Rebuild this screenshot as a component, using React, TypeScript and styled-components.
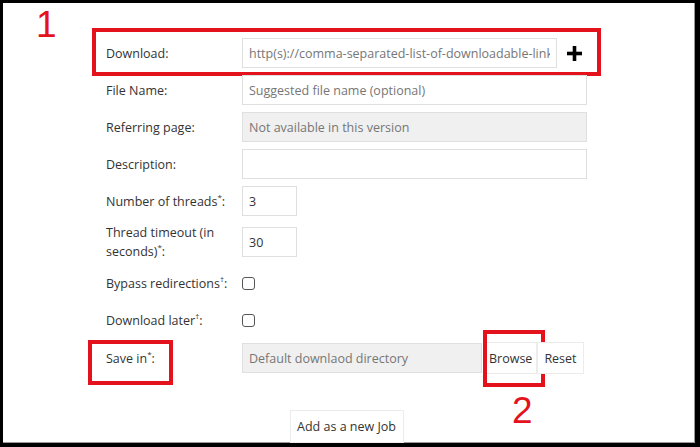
import React from "react";
import styled, { createGlobalStyle, css } from "styled-components";

const GlobalStyle = createGlobalStyle`
  html, body {
    margin: 0;
    padding: 0;
    background: #000;
  }
  body {
    font-family: "Open Sans", "Noto Sans", Arial, sans-serif;
    font-size: 12.5px;
    color: #333;
  }
`;

const Frame = styled.div`
  margin: 3px 5px 4px 3px;
  height: 440px;
  background: #fff;
  box-shadow: inset -1px -1px 0 #9a9a9a;
  overflow: hidden;
`;

const Form = styled.div`
  width: 481px;
  padding: 35px 0 0 103px;
  display: flex;
  flex-direction: column;
  gap: 7px;
`;

const Row = styled.div<{ $marked?: boolean }>`
  position: relative;
  display: grid;
  grid-template-columns: 136px 1fr;
  align-items: center;
  min-height: 30px;

  ${(p) =>
    p.$marked &&
    css`
      &::after {
        content: "";
        position: absolute;
        top: -10px;
        left: -14px;
        right: -14px;
        bottom: -8px;
        border: 4px solid #e3121d;
        pointer-events: none;
      }
    `}
`;

const Label = styled.label<{ $marked?: boolean }>`
  position: relative;
  align-self: stretch;
  display: flex;
  align-items: center;
  line-height: 19px;
  color: #333;

  sup {
    font-size: 8px;
    line-height: 0;
    vertical-align: 6px;
  }

  ${(p) =>
    p.$marked &&
    css`
      &::after {
        content: "";
        position: absolute;
        top: -2px;
        left: -18px;
        width: 85px;
        height: 45px;
        box-sizing: border-box;
        border: 4px solid #e3121d;
        pointer-events: none;
      }
    `}
`;

const Mark = styled.span`
  position: absolute;
  font-family: "Liberation Sans", Arial, sans-serif;
  font-size: 37px;
  line-height: 37px;
  color: #e3121d;
  pointer-events: none;
`;

const Field = styled.div`
  display: flex;
  align-items: center;
`;

const Input = styled.input<{ $width?: number; $disabled?: boolean }>`
  box-sizing: border-box;
  height: 30px;
  width: ${(p) => (p.$width ? `${p.$width}px` : "100%")};
  padding: 0 6px;
  border: 1px solid #dfdfdf;
  border-radius: 0;
  background: ${(p) => (p.$disabled ? "#f0f0f0" : "#fff")};
  font-family: inherit;
  font-size: 12.5px;
  color: #333;
  outline: none;

  &::placeholder {
    color: #767676;
    opacity: 1;
  }
`;

const AddLink = styled.button`
  margin-left: 10px;
  padding: 0;
  border: 0;
  background: none;
  display: flex;
  cursor: pointer;
`;

const Check = styled.input`
  appearance: none;
  box-sizing: border-box;
  margin: 0;
  width: 13px;
  height: 13px;
  border: 1.5px solid #555;
  border-radius: 3px;
  background: #fff;
`;

const Button = styled.button<{ $marked?: boolean; $pad?: number }>`
  position: relative;
  box-sizing: border-box;
  height: 32px;
  padding: 0 ${(p) => p.$pad ?? 6}px;
  border: 1px solid #ececec;
  background: #fff;
  font-family: inherit;
  font-size: 12.5px;
  color: #333;
  white-space: nowrap;
  cursor: pointer;

  ${(p) =>
    p.$marked &&
    css`
      &::after {
        content: "";
        position: absolute;
        top: -13px;
        left: -2px;
        right: -9px;
        bottom: -14px;
        border: 4px solid #e3121d;
        pointer-events: none;
      }
    `}
`;

const Submit = styled(Button)`
  align-self: center;
  margin-top: 29px;
  width: 114px;
  height: 33px;
  padding: 0;
`;

const PlusIcon = () => (
  <svg width="15" height="15" viewBox="0 0 15 15">
    <rect x="5.7" y="0" width="3.6" height="15" fill="#000" />
    <rect x="0" y="5.7" width="15" height="3.6" fill="#000" />
  </svg>
);

export default function App() {
  return (
    <>
      <GlobalStyle />
      <Frame>
        <Form>
          <Row $marked>
            <Mark style={{ left: -70, top: -32 }}>1</Mark>
            <Label>Download:</Label>
            <Field>
              <Input
                $width={315}
                placeholder="http(s)://comma-separated-list-of-downloadable-links"
              />
              <AddLink aria-label="Add">
                <PlusIcon />
              </AddLink>
            </Field>
          </Row>
          <Row>
            <Label>File Name:</Label>
            <Input placeholder="Suggested file name (optional)" />
          </Row>
          <Row>
            <Label>Referring page:</Label>
            <Input $disabled placeholder="Not available in this version" readOnly />
          </Row>
          <Row>
            <Label>Description:</Label>
            <Input />
          </Row>
          <Row>
            <Label>
              <span>
                Number of threads<sup>*</sup>:
              </span>
            </Label>
            <Input $width={55} defaultValue="3" />
          </Row>
          <Row>
            <Label>
              <span>
                Thread timeout (in
                <br />
                seconds)<sup>*</sup>:
              </span>
            </Label>
            <Input $width={55} defaultValue="30" />
          </Row>
          <Row>
            <Label>
              <span>
                Bypass redirections<sup>†</sup>:
              </span>
            </Label>
            <Field>
              <Check type="checkbox" />
            </Field>
          </Row>
          <Row>
            <Label>
              <span>
                Download later<sup>†</sup>:
              </span>
            </Label>
            <Field>
              <Check type="checkbox" />
            </Field>
          </Row>
          <Row>
            <Label $marked>
              <span>
                Save in<sup>*</sup>:
              </span>
            </Label>
            <Field>
              <Input $width={240} $disabled placeholder="Default downlaod directory" readOnly />
              <Button $marked $pad={4} style={{ marginLeft: 2 }}>
                Browse
                <Mark style={{ left: 27, top: 49 }}>2</Mark>
              </Button>
              <Button $pad={6}>Reset</Button>
            </Field>
          </Row>
          <Submit>Add as a new Job</Submit>
        </Form>
      </Frame>
    </>
  );
}
